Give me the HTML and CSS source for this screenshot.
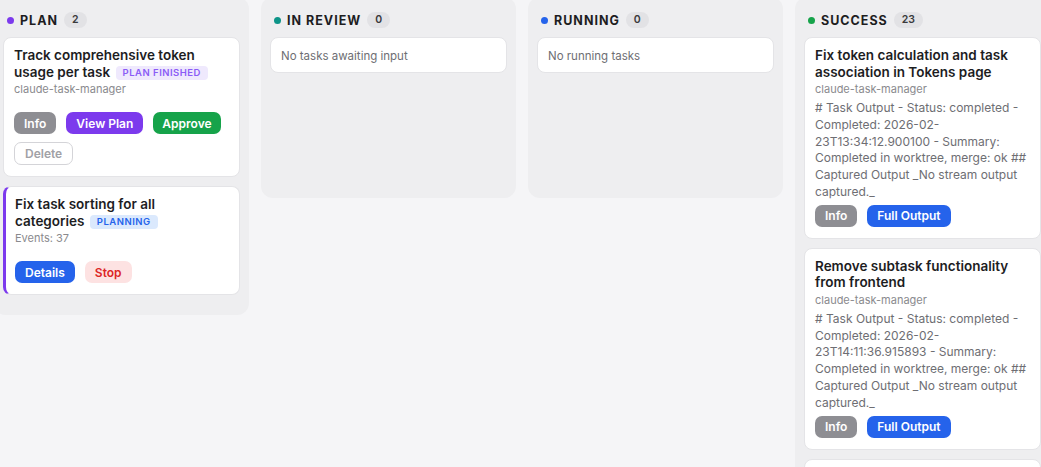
FILE: index.html
```html
<!DOCTYPE html>
<html>
<head>
<meta charset="utf-8">
<link rel="stylesheet" href="styles.css">
</head>
<body>
<div class="board">
  <section class="column">
    <header class="col-head"><span class="dot dot-purple"></span><span class="col-title">PLAN</span><span class="count">2</span></header>
    <div class="cards">
      <article class="card">
        <h3 class="title">Track comprehensive token usage per task&nbsp;<span class="tag tag-purple">PLAN FINISHED</span></h3>
        <div class="meta">claude-task-manager</div>
        <div class="actions">
          <button class="btn btn-gray">Info</button>
          <button class="btn btn-purple">View Plan</button>
          <button class="btn btn-green">Approve</button>
          <button class="btn btn-outline">Delete</button>
        </div>
      </article>
      <article class="card card-active">
        <h3 class="title">Fix task sorting for all categories&nbsp;<span class="tag tag-blue">PLANNING</span></h3>
        <div class="meta">Events: 37</div>
        <div class="actions">
          <button class="btn btn-blue">Details</button>
          <button class="btn btn-red">Stop</button>
        </div>
      </article>
    </div>
  </section>
  <section class="column">
    <header class="col-head"><span class="dot dot-teal"></span><span class="col-title">IN REVIEW</span><span class="count">0</span></header>
    <div class="cards">
      <div class="card empty">No tasks awaiting input</div>
    </div>
  </section>
  <section class="column">
    <header class="col-head"><span class="dot dot-blue"></span><span class="col-title">RUNNING</span><span class="count">0</span></header>
    <div class="cards">
      <div class="card empty">No running tasks</div>
    </div>
  </section>
  <section class="column">
    <header class="col-head"><span class="dot dot-green"></span><span class="col-title">SUCCESS</span><span class="count">23</span></header>
    <div class="cards">
      <article class="card">
        <h3 class="title">Fix token calculation and task association in Tokens page</h3>
        <div class="meta">claude-task-manager</div>
        <p class="output"># Task Output - Status: completed - Completed: 2026-02-23T13:34:12.900100 - Summary: Completed in worktree, merge: ok ## Captured Output _No stream output captured._</p>
        <div class="actions">
          <button class="btn btn-gray">Info</button>
          <button class="btn btn-blue">Full Output</button>
        </div>
      </article>
      <article class="card">
        <h3 class="title">Remove subtask functionality from frontend</h3>
        <div class="meta">claude-task-manager</div>
        <p class="output"># Task Output - Status: completed - Completed: 2026-02-23T14:11:36.915893 - Summary: Completed in worktree, merge: ok ## Captured Output _No stream output captured._</p>
        <div class="actions">
          <button class="btn btn-gray">Info</button>
          <button class="btn btn-blue">Full Output</button>
        </div>
      </article>
      <article class="card card-stub"></article>
    </div>
  </section>
</div>
</body>
</html>
```
FILE: styles.css
```css
html, body {
  margin: 0;
  padding: 0;
  background: #f5f5f7;
  font-family: Inter, "Noto Sans", "Liberation Sans", sans-serif;
  color: #1d1d1f;
  overflow: hidden;
  height: 467px;
}
.board {
  display: flex;
  align-items: flex-start;
  gap: 12px;
  margin-left: -6px;
  margin-top: -3px;
}
.column {
  flex: 0 0 255px;
  box-sizing: border-box;
  background: #eeeef0;
  border-radius: 12px;
  padding: 0 9px 20px;
  min-height: 201px;
}
.col-head {
  display: flex;
  align-items: center;
  height: 16px;
  padding: 15px 0 9px 4px;
}
.dot {
  width: 7px;
  height: 7px;
  border-radius: 50%;
  margin-right: 6px;
}
.dot-purple { background: #7c3aed; }
.dot-teal { background: #0d9488; }
.dot-blue { background: #2563eb; }
.dot-green { background: #16a34a; }
.col-title {
  font-size: 12.5px;
  font-weight: 700;
  letter-spacing: 1px;
  color: #1d1d1f;
}
.count {
  margin-left: 6px;
  background: #e2e2e5;
  color: #3a3a3c;
  font-size: 10.5px;
  font-weight: 600;
  border-radius: 8px;
  height: 16px;
  line-height: 16px;
  padding: 0 8px;
}
.cards {
  display: flex;
  flex-direction: column;
  gap: 9px;
}
.card {
  background: #ffffff;
  border: 1px solid #e4e4e7;
  border-radius: 8px;
  padding: 9px 10px 11px;
}
.card-active {
  border-left: 3px solid #7c3aed;
  padding-left: 9px;
}
.card-stub {
  height: 40px;
}
.empty {
  font-size: 11.5px;
  color: #6e6e73;
  padding: 11px 10px 9px;
  line-height: 14px;
}
.title {
  margin: 0;
  font-size: 13.5px;
  line-height: 16.5px;
  font-weight: 600;
  color: #1d1d1f;
}
.tag {
  display: inline-block;
  vertical-align: 1px;
  font-size: 9.5px;
  font-weight: 600;
  letter-spacing: 0.5px;
  line-height: 14px;
  padding: 0 7px;
  border-radius: 4px;
  margin-left: 2px;
}
.tag-purple { background: #efe9fd; color: #8b5cf6; }
.tag-blue { background: #dbe9fd; color: #2563eb; }
.meta {
  font-size: 11px;
  line-height: 14px;
  color: #8a8a8e;
  margin-top: 2px;
}
.output {
  margin: 4px 0 0;
  font-size: 12px;
  line-height: 16.8px;
  color: #6e6e73;
}
.actions {
  display: flex;
  flex-wrap: wrap;
  gap: 8px 10px;
  margin-top: 16px;
}
.output + .actions { margin-top: 4px; }
.btn {
  font-family: inherit;
  font-size: 12px;
  font-weight: 600;
  height: 22px;
  padding: 0 10px;
  border: none;
  border-radius: 7px;
  color: #fff;
  cursor: pointer;
}
.btn-gray { background: #8e8e93; }
.btn-purple { background: #7c3aed; }
.btn-green { background: #16a34a; padding: 0 9px; }
.btn-blue { background: #2563eb; }
.btn-red { background: #fde2e2; color: #dc2626; }
.btn-outline {
  background: #fff;
  color: #a1a1a6;
  border: 1px solid #d4d4d8;
  height: 23px;
}
```
